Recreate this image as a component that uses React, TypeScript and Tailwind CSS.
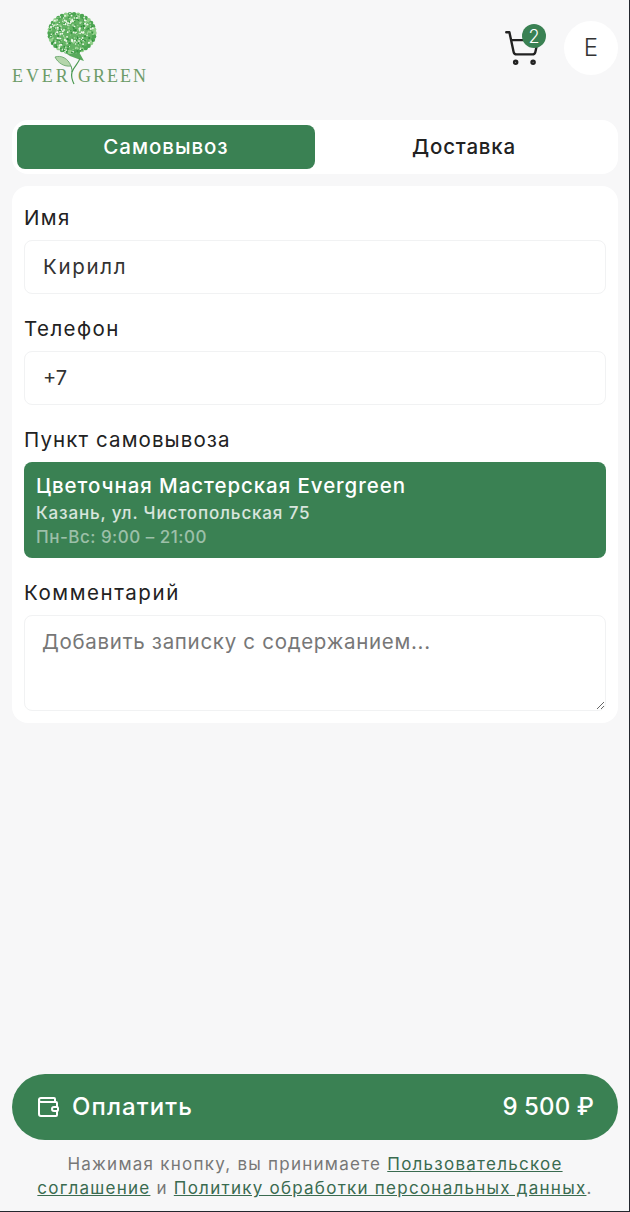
import React from "react";
import { ShoppingCart, Wallet } from "lucide-react";

const font = { fontFamily: "Inter, 'Noto Sans', sans-serif" };

function Logo() {
  const dots: React.ReactElement[] = [];
  let seed = 11;
  const rnd = () => {
    seed = (seed * 16807) % 2147483647;
    return seed / 2147483647;
  };
  // scalloped outline
  for (let i = 0; i < 34; i++) {
    const a = (i / 34) * Math.PI * 2;
    const x = 60 + Math.cos(a) * 22.5;
    const y = 33 + Math.sin(a) * 19;
    dots.push(<circle key={"e" + i} cx={x} cy={y} r={2.2} fill={i % 3 === 0 ? "#8fcf88" : "#4ca552"} />);
  }
  // blossoms: pale clusters on green
  for (let i = 0; i < 300; i++) {
    const a = rnd() * Math.PI * 2;
    const r = Math.sqrt(rnd()) * 23;
    const x = 60 + Math.cos(a) * r;
    const y = 33 + Math.sin(a) * r * 0.86;
    const t = rnd();
    const c = t < 0.42 ? "#f1f8ec" : t < 0.7 ? "#2f8f3c" : "#9ad492";
    dots.push(<circle key={i} cx={x} cy={y} r={0.5 + rnd() * 0.6} fill={c} />);
  }
  return (
    <svg width="140" height="88" viewBox="0 0 140 88" className="block">
      <ellipse cx="60" cy="33" rx="23" ry="20" fill="#63b263" />
      <path d="M46 48 C54 54 62 55 67 52 L72 61 L66 59 L58 56 Z" fill="#58a95c" />
      {dots}
      <path d="M68 58 C67 63 62 66 60 72 C59 76 60 80 62 84" fill="none" stroke="#4c9a52" strokeWidth="1.2" />
      <path d="M43 57 C49 55 56 58 59 66 C52 67 46 63 43 57 Z" fill="#b4d6ab" stroke="#5fa063" strokeWidth="0.8" />
      <path d="M59 66 C60 69 60 70 60 72" fill="none" stroke="#4c9a52" strokeWidth="1" />
      <text x="0" y="82" fontFamily="'Liberation Serif', serif" fontSize="18" letterSpacing="2.9" fill="#6d9c68">EVER</text>
      <text x="66" y="82" fontFamily="'Liberation Serif', serif" fontSize="18" letterSpacing="2" fill="#6d9c68">GREEN</text>
    </svg>
  );
}

export default function App() {
  return (
    <div style={font} className="flex h-[1212px] w-[630px] flex-col overflow-hidden border-r border-b border-[#23272e] bg-[#f7f7f8] pr-[11px] pl-3 text-[#222]">
      <header className="flex h-[120px] shrink-0 items-start justify-between">
        <Logo />
        <div className="flex items-center pt-[21px]">
          <div className="relative mr-[23px]">
            <ShoppingCart size={38} strokeWidth={1.5} color="#222" />
            <span className="absolute top-[-5px] right-[-5px] flex h-6 w-6 items-center justify-center rounded-full bg-[#3a8153] text-[18px] font-light text-white">2</span>
          </div>
          <div className="flex h-[54px] w-[54px] items-center justify-center rounded-full bg-white text-[24px] font-light text-[#333]">E</div>
        </div>
      </header>

      <div className="flex h-[54px] shrink-0 rounded-2xl bg-white p-[5px]">
        <div className="flex h-11 w-[298px] items-center justify-center rounded-lg bg-[#3a8153] text-[20.5px] font-medium tracking-[0.95px] text-white">Самовывоз</div>
        <div className="flex flex-1 items-center justify-center text-[20.5px] font-medium tracking-[0.8px]">Доставка</div>
      </div>

      <div className="mt-3 flex shrink-0 flex-col rounded-2xl bg-white px-3 pt-[18px] pb-3">
        <div className="h-7 text-[20.5px] leading-7 tracking-[1.4px]">Имя</div>
        <div className="mt-2 flex h-[54px] items-center rounded-lg border border-[#f1f2f3] pl-[18px] text-[20.5px] tracking-[1.7px] text-[#333]">Кирилл</div>
        <div className="mt-[21px] h-7 text-[20.5px] leading-7 tracking-[1.4px]">Телефон</div>
        <div className="mt-2 flex h-[54px] items-center rounded-lg border border-[#f1f2f3] pl-[18px] text-[20px] text-[#333]">+7</div>
        <div className="mt-[21px] h-7 text-[20.5px] leading-7 tracking-[1.1px]">Пункт самовывоза</div>
        <div className="mt-2 flex h-24 flex-col justify-start rounded-lg bg-[#3a8153] px-3 pt-3">
          <div className="text-[20.5px] leading-6 font-medium tracking-[0.93px] text-white">Цветочная Мастерская Evergreen</div>
          <div className="mt-[3px] text-[17px] leading-6 font-medium tracking-[0.85px] text-white/80">Казань, ул. Чистопольская 75</div>
          <div className="text-[17px] leading-6 font-medium tracking-[0.5px] text-white/50">Пн-Вс: 9:00 – 21:00</div>
        </div>
        <div className="mt-[21px] h-7 text-[20.5px] leading-7 tracking-[1.55px]">Комментарий</div>
        <textarea
          readOnly
          placeholder="Добавить записку с содержанием..."
          style={font}
          className="mt-2 block h-24 w-full rounded-lg border border-[#f1f2f3] px-[17px] py-3 text-[20.5px] leading-7 tracking-[0.7px] text-[#333] placeholder:text-[#777] outline-none"
        />
      </div>

      <div className="mt-auto flex h-[66px] shrink-0 items-center justify-between rounded-full bg-[#3a8153] px-6 text-[24px] font-medium text-white">
        <div className="flex items-center gap-3">
          <Wallet size={24} strokeWidth={2} />
          <span className="tracking-[1.1px]">Оплатить</span>
        </div>
        <span className="tracking-[0.1px]">9 500 ₽</span>
      </div>
      <p className="mt-3 mb-[11px] shrink-0 px-2 text-center text-[17px] leading-6 tracking-[1.25px] text-[#777]">
        Нажимая кнопку, вы принимаете <a className="text-[#3a6b50] underline">Пользовательское соглашение</a> и <a className="text-[#3a6b50] underline">Политику обработки персональных данных</a>.
      </p>
    </div>
  );
}
